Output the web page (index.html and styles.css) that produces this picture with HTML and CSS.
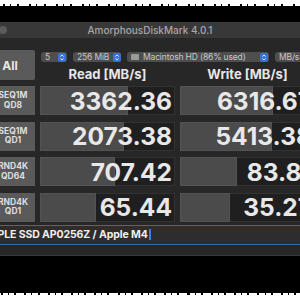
FILE: index.html
```html
<!DOCTYPE html>
<html lang="en">
  <head>
    <meta charset="UTF-8" />
    <meta name="viewport" content="width=device-width, initial-scale=1.0" />
    <title>AmorphousDiskMark</title>
    <link rel="stylesheet" href="styles.css">
  </head>
  <body>
    <div class="edge edge-top"></div>

    <div class="window">
      <div class="titlebar">
        <span class="light"></span>
        <span class="title">AmorphousDiskMark 4.0.1</span>
      </div>

      <div class="content">
        <div class="top">
          <button class="all">All</button>
          <div class="top-right">
            <div class="selects">
              <div class="select s-count"><span>5</span><i class="stepper"></i></div>
              <div class="select s-size"><span>256 MiB</span><i class="stepper"></i></div>
              <div class="select s-disk">
                <i class="drive"></i><span>Macintosh HD (86% used)</span><i class="stepper"></i>
              </div>
              <div class="select s-unit"><span>MB/s</span></div>
            </div>
            <div class="heads">
              <div>Read [MB/s]</div>
              <div>Write [MB/s]</div>
            </div>
          </div>
        </div>

        <div class="results">
          <div class="label">SEQ1M<br />QD8</div>
          <div class="score"><div class="bar" style="width: 88px"></div><span>3362.36</span></div>
          <div class="score"><div class="bar" style="width: 93px"></div><span>6316.67</span></div>

          <div class="label">SEQ1M<br />QD1</div>
          <div class="score"><div class="bar" style="width: 84px"></div><span>2073.38</span></div>
          <div class="score"><div class="bar" style="width: 92px"></div><span>5413.38</span></div>

          <div class="label">RND4K<br />QD64</div>
          <div class="score"><div class="bar" style="width: 75px"></div><span>707.42</span></div>
          <div class="score"><div class="bar" style="width: 57px"></div><span>83.81</span></div>

          <div class="label">RND4K<br />QD1</div>
          <div class="score"><div class="bar" style="width: 56px"></div><span>65.44</span></div>
          <div class="score"><div class="bar" style="width: 50px"></div><span>35.27</span></div>
        </div>

        <div class="field">
          <span class="field-text">APPLE SSD AP0256Z / Apple M4</span><span class="caret"></span>
        </div>
      </div>
    </div>

    <div class="edge edge-bottom"></div>
  </body>
</html>
```

FILE: styles.css
```css
html,
body {
  margin: 0;
  padding: 0;
}
body {
  width: 300px;
  height: 300px;
  overflow: hidden;
  background: #000;
  font-family: Inter, "Liberation Sans", sans-serif;
  display: flex;
  flex-direction: column;
}
.edge {
  flex: none;
  background-color: #fff;
}
.edge-top {
  height: 4px;
  border-bottom: 2px solid transparent;
  border-image: repeating-linear-gradient(90deg, #fff 0 5px, #000 5px 7px, #fff 7px 12px, #000 12px 13px, #fff 13px 19px, #000 19px 21px, #fff 21px 26px) 2;
  margin-bottom: 16px;
}
.edge-bottom {
  margin-top: auto;
  height: 5px;
  border-top: 2px solid transparent;
  border-image: repeating-linear-gradient(90deg, #fff 0 3px, #000 3px 5px, #fff 5px 10px, #000 10px 11px, #fff 11px 16px, #000 16px 18px, #fff 18px 23px) 2;
}
.window {
  flex: none;
  width: 330px;
  margin-left: -9px;
  background: #272727;
  border-bottom: 1px solid #3a3a3a;
}
.titlebar {
  height: 16px;
  display: flex;
  align-items: center;
  padding-left: 8px;
  padding-right: 28px;
  background: #383838;
}
.light {
  width: 8px;
  height: 8px;
  border-radius: 50%;
  background: #5b5b5b;
}
.title {
  flex: 1;
  text-align: center;
  font-size: 10px;
  font-weight: 500;
  color: #a6a6a6;
}
.content {
  padding: 12px 0 10px;
}
.top {
  display: flex;
  gap: 5px;
}
.all {
  width: 44px;
  height: 30px;
  padding: 0 6px 0 0;
  border: none;
  border-radius: 2px;
  background: #5a5a5a;
  color: #e8e8e8;
  font-family: inherit;
  font-size: 12px;
  font-weight: 700;
}
.top-right {
  display: flex;
  flex-direction: column;
}
.selects {
  display: flex;
  gap: 6px;
  margin: 2px 0 0 1px;
}
.select {
  height: 10px;
  display: flex;
  align-items: center;
  gap: 4px;
  padding: 0 1px 0 4px;
  border-radius: 3px;
  background: #4e4e4e;
  color: #c8c8c8;
  font-size: 8.5px;
  letter-spacing: -0.15px;
  white-space: nowrap;
}
.select span {
  flex: 1;
}
.s-count {
  width: 21px;
}
.s-size {
  width: 43px;
}
.s-disk {
  width: 137px;
}
.s-unit {
  width: 40px;
}
.stepper {
  flex: none;
  width: 8px;
  height: 9px;
  border-radius: 2px;
  background: #3a72d6 url("data:image/svg+xml,%3Csvg xmlns='http://www.w3.org/2000/svg' width='8' height='9'%3E%3Cpath d='M2.5 3.5 4 2 5.5 3.5M2.5 5.5 4 7 5.5 5.5' fill='none' stroke='%23fff' stroke-width='0.9'/%3E%3C/svg%3E") no-repeat;
}
.drive {
  flex: none;
  width: 8px;
  height: 6px;
  border-radius: 1px;
  background: #9a9a9a;
}
.heads {
  display: grid;
  grid-template-columns: 135px 135px;
  column-gap: 5px;
  margin-top: 5px;
  text-align: center;
  font-size: 13px;
  font-weight: 700;
  line-height: 15px;
  color: #e6e6e6;
}
.results {
  display: grid;
  grid-template-columns: 44px 135px 135px;
  grid-auto-rows: 29px;
  gap: 6.5px 5px;
  margin-top: 4px;
}
.label {
  display: flex;
  align-items: center;
  justify-content: center;
  text-align: center;
  background: #5a5a5a;
  color: #dedede;
  font-size: 8.5px;
  font-weight: 700;
  line-height: 9.5px;
}
.score {
  position: relative;
  display: flex;
  align-items: center;
  justify-content: flex-end;
  padding-right: 3px;
  background: #1f1f1f;
  box-shadow: inset 0 0 0 1px #323232;
  color: #e8e8e8;
  font-size: 24.5px;
  font-weight: 700;
}
.bar {
  position: absolute;
  left: 0;
  top: 0;
  bottom: 0;
  background: #4b4b4b;
  box-shadow: inset 0 0 0 1px #535353;
}
.score span {
  position: relative;
}
.field {
  margin-top: 3px;
  height: 18px;
  display: flex;
  align-items: center;
  border-top: 1px solid #2f6db5;
  border-bottom: 1px solid #2f6db5;
  background: #2d2d2d;
  overflow: hidden;
  white-space: nowrap;
  color: #f0f0f0;
  font-size: 10.5px;
  letter-spacing: -0.1px;
  font-weight: 700;
}
.field-text {
  margin-left: -8px;
}
.caret {
  width: 2px;
  height: 11px;
  margin-left: 1px;
  background: #3d7de0;
}
```
